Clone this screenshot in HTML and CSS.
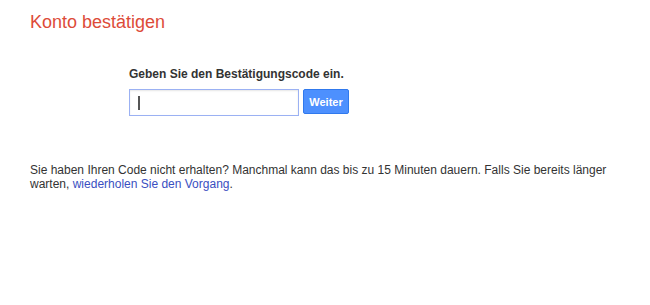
FILE: index.html
```html
<!DOCTYPE html>
<html lang="de">
<head>
<meta charset="utf-8">
<title>Konto bestätigen</title>
<link rel="stylesheet" href="styles.css">
</head>
<body>
<div class="page">
  <h1 class="title">Konto bestätigen</h1>
  <form class="verify">
    <label class="label">Geben Sie den Bestätigungscode ein.</label>
    <div class="row">
      <div class="field"><span class="caret"></span></div>
      <button type="button" class="btn">Weiter</button>
    </div>
  </form>
  <p class="note"><span>Sie haben Ihren Code nicht erhalten? Manchmal kann das bis zu 15 Minuten dauern. Falls Sie bereits länger</span> <span>warten,</span> <a href="#" class="link">wiederholen Sie den Vorgang</a>.</p>
</div>
</body>
</html>
```
FILE: styles.css
```css
html, body {
  margin: 0;
  padding: 0;
  background: #ffffff;
}
.page {
  padding: 12px 30px 0 30px;
  font-family: "Liberation Sans", Arial, sans-serif;
  color: #222222;
}
.title {
  margin: 0;
  font-size: 18px;
  font-weight: normal;
  line-height: 21px;
  color: #dd4b39;
}
.verify {
  margin: 34px 0 0 99px;
}
.label {
  display: block;
  font-size: 12px;
  font-weight: bold;
  line-height: 14px;
  color: #333333;
}
.row {
  display: flex;
  gap: 4px;
  margin-top: 8px;
}
.field {
  box-sizing: border-box;
  width: 170px;
  height: 27px;
  border: 1px solid #9bb1f3;
  box-shadow: inset 0 1px 2px rgba(0,0,0,0.1);
  display: flex;
  align-items: center;
  padding-left: 8px;
}
.caret {
  display: block;
  width: 2px;
  height: 14px;
  background: #555555;
}
.btn {
  box-sizing: border-box;
  width: 46px;
  height: 25px;
  border: 1px solid #3079ed;
  border-radius: 2px;
  background: #4d90fe;
  color: #ffffff;
  font-family: "Liberation Sans", Arial, sans-serif;
  font-size: 11px;
  font-weight: bold;
  padding: 0;
}
.note {
  margin: 47px 0 0 0;
  font-size: 12px;
  line-height: 14px;
  color: #333333;
}
.link {
  color: #3a4fc1;
  text-decoration: none;
}
```
